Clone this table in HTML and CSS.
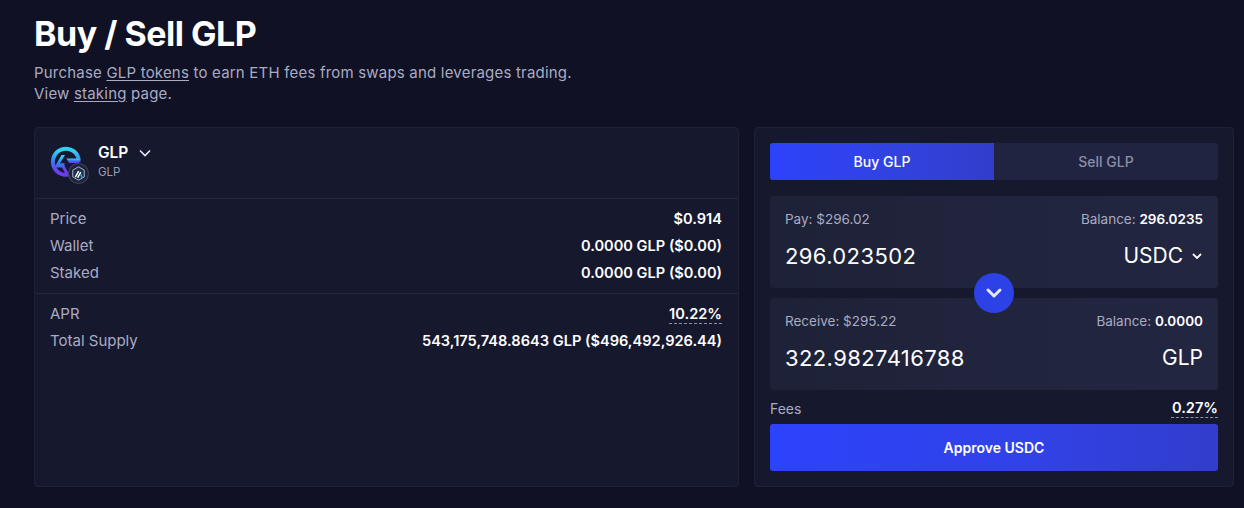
FILE: index.html
```html
<!DOCTYPE html>
<html>
<head>
<meta charset="utf-8">
<link rel="stylesheet" href="styles.css">
</head>
<body>
<div class="page">
  <h1 class="title">Buy / Sell GLP</h1>
  <p class="subtitle">Purchase <a class="link">GLP tokens</a> to earn ETH fees from swaps and leverages trading.<br>View <a class="link">staking</a> page.</p>

  <div class="grid">
    <section class="panel info">
      <div class="token-head">
        <div class="token-icon">
          <svg width="40" height="40" viewBox="0 0 40 40">
            <defs>
              <linearGradient id="g1" x1="0" y1="0" x2="0" y2="1">
                <stop offset="0.1" stop-color="#2fd0f0"/>
                <stop offset="0.5" stop-color="#3d74ee"/>
                <stop offset="0.9" stop-color="#6b3cf0"/>
              </linearGradient>
            </defs>
            <path d="M28.6 17 A13 13 0 1 0 24 30" fill="none" stroke="url(#g1)" stroke-width="4"/>
            <path d="M5.5 23.5 L11.5 13 L15 13 L10 21.3 L14.5 21.3 L14.5 24 L18.5 31 L15 31 L12 25.5 L5.5 25.5 Z" fill="url(#g1)"/>
            <path d="M16.5 16.5 L30.5 16.5 L30.5 19.5 L28 21 L19 21 Z" fill="url(#g1)"/>
          </svg>
          <span class="badge">
            <svg width="21" height="21" viewBox="0 0 20 20">
              <circle cx="10" cy="10" r="9.5" fill="#1f2338" stroke="#3e4360" stroke-width="1"/>
              <path d="M10 3.6 L15.5 6.8 L15.5 13.2 L10 16.4 L4.5 13.2 L4.5 6.8 Z" fill="#213147" stroke="#a6bad6" stroke-width="0.9"/>
              <path d="M7 13.4 L10.2 7.8" stroke="#ffffff" stroke-width="1.4"/>
              <path d="M9.2 14 L12.2 8.8" stroke="#ffffff" stroke-width="1.4"/>
              <path d="M11.8 10.6 L13.8 13.8" stroke="#28a0f0" stroke-width="1.4"/>
            </svg>
          </span>
        </div>
        <div class="token-names">
          <div class="token-name">GLP
            <svg class="chev" width="14" height="10" viewBox="0 0 14 10"><path d="M2 2.5 L7 7.5 L12 2.5" fill="none" stroke="#e4e6f3" stroke-width="1.6"/></svg>
          </div>
          <div class="token-sub">GLP</div>
        </div>
      </div>
      <div class="rows">
        <div class="row"><span class="label">Price</span><span class="value">$0.914</span></div>
        <div class="row"><span class="label">Wallet</span><span class="value">0.0000 GLP ($0.00)</span></div>
        <div class="row"><span class="label">Staked</span><span class="value">0.0000 GLP ($0.00)</span></div>
      </div>
      <div class="rows rows-last">
        <div class="row"><span class="label">APR</span><span class="value dashed">10.22%</span></div>
        <div class="row"><span class="label">Total Supply</span><span class="value">543,175,748.8643 GLP ($496,492,926.44)</span></div>
      </div>
    </section>

    <section class="panel swap">
      <div class="tabs">
        <div class="tab active">Buy GLP</div>
        <div class="tab">Sell GLP</div>
      </div>
      <div class="boxes">
        <div class="box">
          <div class="box-top"><span>Pay: $296.02</span><span>Balance: <b>296.0235</b></span></div>
          <div class="box-main"><span class="amount">296.023502</span><span class="asset">USDC <svg width="12" height="8" viewBox="0 0 12 8"><path d="M2 2 L6 6 L10 2" fill="none" stroke="#ffffff" stroke-width="1.8"/></svg></span></div>
        </div>
        <div class="switch">
          <svg width="18" height="12" viewBox="0 0 18 12"><path d="M3 3 L9 9 L15 3" fill="none" stroke="#e8e9f7" stroke-width="3" stroke-linecap="round" stroke-linejoin="round"/></svg>
        </div>
        <div class="box">
          <div class="box-top"><span>Receive: $295.22</span><span>Balance: <b>0.0000</b></span></div>
          <div class="box-main"><span class="amount">322.9827416788</span><span class="asset">GLP</span></div>
        </div>
      </div>
      <div class="fees"><span class="label">Fees</span><span class="value dashed">0.27%</span></div>
      <button class="approve">Approve USDC</button>
    </section>
  </div>
</div>
</body>
</html>
```

FILE: styles.css
```css
html, body {
  margin: 0;
  padding: 0;
  background: #101124;
  color: #ffffff;
  font-family: Inter, "Noto Sans", sans-serif;
}

.page {
  padding: 12px 10px 20px 34px;
}

.title {
  margin: 0;
  font-size: 34px;
  font-weight: 700;
  line-height: 44px;
  letter-spacing: -0.5px;
}

.subtitle {
  margin: 6px 0 0;
  font-size: 15px;
  line-height: 21px;
  letter-spacing: 0.2px;
  color: #a9abc2;
}

.link {
  color: #a9abc2;
  text-decoration: underline;
  text-underline-offset: 2px;
}

.grid {
  display: grid;
  grid-template-columns: 1fr 480px;
  gap: 15px;
  margin-top: 23px;
}

.panel {
  background: #16182e;
  border: 1px solid #1f2138;
  border-radius: 4px;
}

.token-head {
  display: flex;
  align-items: center;
  gap: 8px;
  padding: 14px 15px 16px;
  border-bottom: 1px solid #232541;
}

.token-icon {
  position: relative;
  width: 40px;
  height: 40px;
}

.token-icon > svg {
  display: block;
}

.badge {
  position: absolute;
  left: 18px;
  top: 21px;
  width: 21px;
  height: 21px;
}

.badge svg {
  display: block;
}

.token-names {
  margin-top: -2px;
}

.token-name {
  display: flex;
  align-items: center;
  gap: 10px;
  font-size: 15.5px;
  font-weight: 600;
  line-height: 20px;
}

.token-sub {
  margin-top: 2px;
  font-size: 11.5px;
  color: #9a9cb3;
  line-height: 14px;
}

.rows {
  padding: 6px 16px 7px 15px;
  border-bottom: 1px solid #232541;
}

.rows-last {
  border-bottom: none;
}

.row {
  display: flex;
  justify-content: space-between;
  align-items: center;
  height: 27px;
}

.label {
  font-size: 15px;
  color: #a9abc2;
}

.value {
  font-size: 14.6px;
  font-weight: 600;
  color: #ffffff;
}

.dashed {
  text-decoration: underline dashed;
  text-decoration-color: #8e91aa;
  text-underline-offset: 4px;
  text-decoration-thickness: 1px;
}

.swap {
  padding: 15px 15px 15px;
  display: flex;
  flex-direction: column;
}

.tabs {
  display: flex;
  height: 37px;
  background: #212440;
  border-radius: 3px;
  overflow: hidden;
}

.tab {
  flex: 1;
  display: flex;
  align-items: center;
  justify-content: center;
  font-size: 14px;
  font-weight: 500;
  color: #8b8ea6;
}

.tab.active {
  background: linear-gradient(90deg, #2d42fc 0%, #3242de 60%, #323dcc 100%);
  color: #ffffff;
}

.boxes {
  position: relative;
  display: flex;
  flex-direction: column;
  gap: 10px;
  margin-top: 16px;
}

.box {
  background: linear-gradient(90deg, #1e2238 0%, #232641 100%);
  border-radius: 4px;
  height: 92px;
  box-sizing: border-box;
  padding: 14px 15px 0;
}

.box-top {
  display: flex;
  justify-content: space-between;
  font-size: 13.5px;
  color: #a9abc2;
  line-height: 18px;
}

.box-top b {
  color: #ffffff;
  font-weight: 600;
}

.box-main {
  display: flex;
  justify-content: space-between;
  align-items: center;
  margin-top: 14px;
  font-size: 22px;
  letter-spacing: 0.4px;
  line-height: 28px;
}

.asset {
  display: flex;
  align-items: center;
  gap: 8px;
  font-size: 21px;
  letter-spacing: 0;
}

.asset svg {
  display: block;
}

.switch {
  position: absolute;
  left: 50%;
  top: 77px;
  width: 40px;
  height: 40px;
  margin-left: -20px;
  border-radius: 50%;
  background: #2d42e6;
  display: flex;
  align-items: center;
  justify-content: center;
}

.fees {
  display: flex;
  justify-content: space-between;
  align-items: center;
  margin-top: 8px;
  height: 20px;
}

.fees .label {
  font-size: 14px;
}

.approve {
  margin-top: 6px;
  height: 47px;
  border: none;
  border-radius: 3px;
  background: linear-gradient(90deg, #2d42fc 0%, #3142e6 60%, #323dcc 100%);
  color: #ffffff;
  font-family: Inter, "Noto Sans", sans-serif;
  font-size: 14px;
  font-weight: 600;
}
```
